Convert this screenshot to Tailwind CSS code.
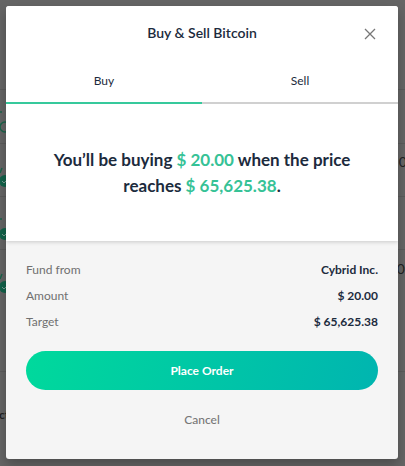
<!DOCTYPE html>
<html lang="en">
<head>
<meta charset="utf-8">
<meta name="viewport" content="width=device-width, initial-scale=1">
<title>Buy &amp; Sell Bitcoin</title>
<script src="https://cdn.jsdelivr.net/npm/@tailwindcss/browser@4"></script>
</head>
<body class="relative min-h-screen overflow-hidden bg-[#656565] font-['Lato','Liberation_Sans',sans-serif] text-[#1c2b3d]">
<div class="absolute inset-0 overflow-hidden text-[#222]" aria-hidden="true">
  <div class="absolute inset-x-0 top-[89px] h-px bg-[#5b5b5b]"></div>
  <div class="absolute inset-x-0 top-[143px] h-px bg-[#5b5b5b]"></div>
  <div class="absolute inset-x-0 top-[196px] h-px bg-[#5b5b5b]"></div>
  <div class="absolute inset-x-0 top-[249px] h-px bg-[#5b5b5b]"></div>
  <div class="absolute inset-x-0 top-[371px] h-px bg-[#5b5b5b]"></div>
  <svg class="absolute left-0 top-0 h-[300px] w-4" viewBox="0 0 16 300" fill="none">
    <g stroke="#1a644b" stroke-width="1.5"><path d="M0 112h2"/><circle cx="5" cy="127" r="5"/><path d="M0 173l2-5M0 219h2M0 279l2-5"/></g>
    <g fill="#12624a"><circle cx="5" cy="181" r="6"/><circle cx="5" cy="234" r="6"/><circle cx="5" cy="287" r="6"/></g>
    <g stroke="#789a8f"><path d="M2 181l2 2 4-4M2 234l2 2 4-4M2 287l2 2 4-4"/></g>
  </svg>
  <span class="absolute right-[-10px] top-[154px] text-sm leading-4">00</span>
  <span class="absolute right-[-8px] top-[261px] text-sm leading-4">00</span>
  <span class="absolute left-[-1px] top-[407px] text-xs leading-4 font-bold">ct</span>
</div>
<main class="relative mt-[6px] mr-[7px] mb-2 ml-[6px] overflow-hidden rounded-[3px] bg-[#f5f5f5] shadow-[0_6px_12px_rgba(0,0,0,0.25)]" role="dialog" aria-labelledby="title">
  <section class="bg-white shadow-[0_1px_4px_rgba(0,0,0,0.18)]">
    <header class="relative flex h-[54px] items-center justify-center">
      <h1 id="title" class="text-sm font-semibold">Buy &amp; Sell Bitcoin</h1>
      <button class="absolute right-5 top-5 flex size-4 items-center justify-center" aria-label="Close">
        <svg class="size-3" viewBox="0 0 12 12" fill="none" stroke="#777" stroke-width="1.3"><path d="M1 1l10 10M11 1L1 11"/></svg>
      </button>
    </header>
    <div class="grid grid-cols-2 text-xs" role="tablist">
      <button class="h-11 border-b-2 border-[#36c99c]" role="tab" aria-selected="true">Buy</button>
      <button class="h-11 border-b-2 border-[#d0d0d0]" role="tab" aria-selected="false">Sell</button>
    </div>
    <p class="px-10 pt-[43px] pb-[42px] text-center text-[17px] leading-[26px] font-bold">You’ll be buying <span class="text-[#36c296]">$ 20.00</span> when the price reaches <span class="text-[#36c296]">$ 65,625.38</span>.</p>
  </section>
  <section class="px-5 pt-4 pb-5 text-xs">
    <dl class="leading-[26px]">
      <div class="flex justify-between"><dt class="text-[#707070]">Fund from</dt><dd class="font-bold">Cybrid Inc.</dd></div>
      <div class="flex justify-between"><dt class="text-[#707070]">Amount</dt><dd class="font-bold">$ 20.00</dd></div>
      <div class="flex justify-between"><dt class="text-[#707070]">Target</dt><dd class="font-bold">$ 65,625.38</dd></div>
    </dl>
    <button class="mt-4 h-[39px] w-full rounded-full bg-[linear-gradient(105deg,#00d99c,#00b5b0)] font-bold text-white">Place Order</button>
    <button class="mt-[10px] block h-[39px] w-full font-medium text-[#777]">Cancel</button>
  </section>
</main>
</body>
</html>
